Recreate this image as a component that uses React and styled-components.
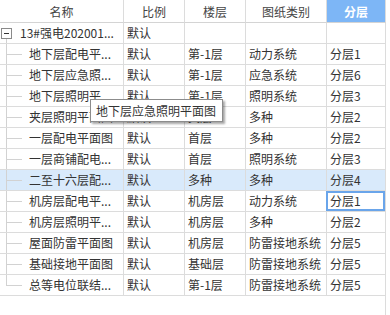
import React from "react";
import styled, { createGlobalStyle, css } from "styled-components";

const Global = createGlobalStyle`
  html, body { margin: 0; padding: 0; background: #fff; }
  body { font-family: "Microsoft YaHei", "Noto Sans CJK SC", "Noto Sans", sans-serif; }
`;

const Frame = styled.div`
  position: relative;
  width: 390px;
  height: 315px;
  overflow: hidden;
  background: #fff;
`;

const Grid = styled.div`
  width: 386px;
  height: 315px;
  border-right: 1px solid #dcdcdc;
  box-sizing: border-box;
`;

const COLS = "124px 61px 61px 81px 59px";

const Row = styled.div`
  display: grid;
  grid-template-columns: ${COLS};
  height: ${(p) => (p.$header ? 23 : 21)}px;
  background: ${(p) => (p.$selected ? "#d9eafb" : "#fff")};
`;

const Cell = styled.div`
  position: relative;
  box-sizing: border-box;
  border-right: 1px solid #dcdcdc;
  border-bottom: 1px solid #dcdcdc;
  font-size: 12px;
  line-height: 20px;
  color: #333;
  padding-left: ${(p) => p.$pad ?? 3}px;
  white-space: nowrap;
  overflow: hidden;
  ${(p) =>
    p.$focus &&
    css`
      box-shadow: inset 0 0 0 2px #6aa5ea;
      margin-left: -1px;
      padding-left: 4px;
    `}
`;

const HeadCell = styled.div`
  box-sizing: border-box;
  border-right: 1px solid #dcdcdc;
  border-bottom: 1px solid #d4d4d4;
  font-size: 12px;
  line-height: 20px;
  padding-top: 2px;
  text-align: center;
  color: ${(p) => (p.$active ? "#fff" : "#444")};
  background: ${(p) => (p.$active ? "#7db6f6" : "#fff")};
  font-weight: ${(p) => (p.$active ? 600 : 400)};
`;

const TreeCell = styled(Cell)`
  &::before {
    content: "";
    position: absolute;
    left: 6px;
    top: ${(p) => (p.$root ? 16 : 0)}px;
    bottom: ${(p) => (p.$last ? 10 : 0)}px;
    ${(p) => (p.$last ? "height: 11px; bottom: auto;" : "")}
    border-left: 1px solid #d2d2d2;
  }
  ${(p) =>
    !p.$root &&
    css`
      &::after {
        content: "";
        position: absolute;
        left: 6px;
        top: 10px;
        width: 16px;
        border-top: 1px solid #d2d2d2;
      }
    `}
`;

const Toggle = styled.span`
  position: absolute;
  left: 1px;
  top: 5px;
  width: 11px;
  height: 11px;
  box-sizing: border-box;
  border: 1px solid #8a8a8a;
  background: #fff;
  z-index: 1;
  &::after {
    content: "";
    position: absolute;
    left: 2px;
    top: 4px;
    width: 5px;
    border-top: 1px solid #333;
  }
`;

const Tooltip = styled.div`
  position: absolute;
  left: 90px;
  top: 99px;
  height: 23px;
  box-sizing: border-box;
  padding: 0 6px 0 5px;
  border: 1px solid #8c8c8c;
  background: #fff;
  box-shadow: 2px 2px 2px rgba(0, 0, 0, 0.35);
  font-size: 12px;
  line-height: 21px;
  color: #333;
  white-space: nowrap;
`;

const rows = [
  ["地下层配电平...", "第-1层", "动力系统", "分层1"],
  ["地下层应急照...", "第-1层", "应急系统", "分层6"],
  ["地下层照明平...", "第-1层", "照明系统", "分层3"],
  ["夹层照明平面图", "夹层", "多种", "分层2"],
  ["一层配电平面图", "首层", "多种", "分层2"],
  ["一层商铺配电...", "首层", "照明系统", "分层3"],
  ["二至十六层配...", "多种", "多种", "分层4"],
  ["机房层配电平...", "机房层", "动力系统", "分层1"],
  ["机房层照明平...", "机房层", "多种", "分层2"],
  ["屋面防雷平面图", "机房层", "防雷接地系统", "分层5"],
  ["基础接地平面图", "基础层", "防雷接地系统", "分层5"],
  ["总等电位联结...", "第-1层", "防雷接地系统", "分层5"],
];

export default function App() {
  return (
    <Frame>
      <Global />
      <Grid>
        <Row $header>
          <HeadCell>名称</HeadCell>
          <HeadCell>比例</HeadCell>
          <HeadCell>楼层</HeadCell>
          <HeadCell>图纸类别</HeadCell>
          <HeadCell $active>分层</HeadCell>
        </Row>
        <Row>
          <TreeCell $root $pad={20}>
            <Toggle />
            13#强电202001...
          </TreeCell>
          <Cell>默认</Cell>
          <Cell />
          <Cell />
          <Cell />
        </Row>
        {rows.map((r, i) => (
          <Row key={i} $selected={i === 6}>
            <TreeCell $pad={29} $last={i === rows.length - 1}>
              {r[0]}
            </TreeCell>
            <Cell>默认</Cell>
            <Cell>{r[1]}</Cell>
            <Cell>{r[2]}</Cell>
            <Cell $focus={i === 7}>{r[3]}</Cell>
          </Row>
        ))}
      </Grid>
      <Tooltip>地下层应急照明平面图</Tooltip>
    </Frame>
  );
}
